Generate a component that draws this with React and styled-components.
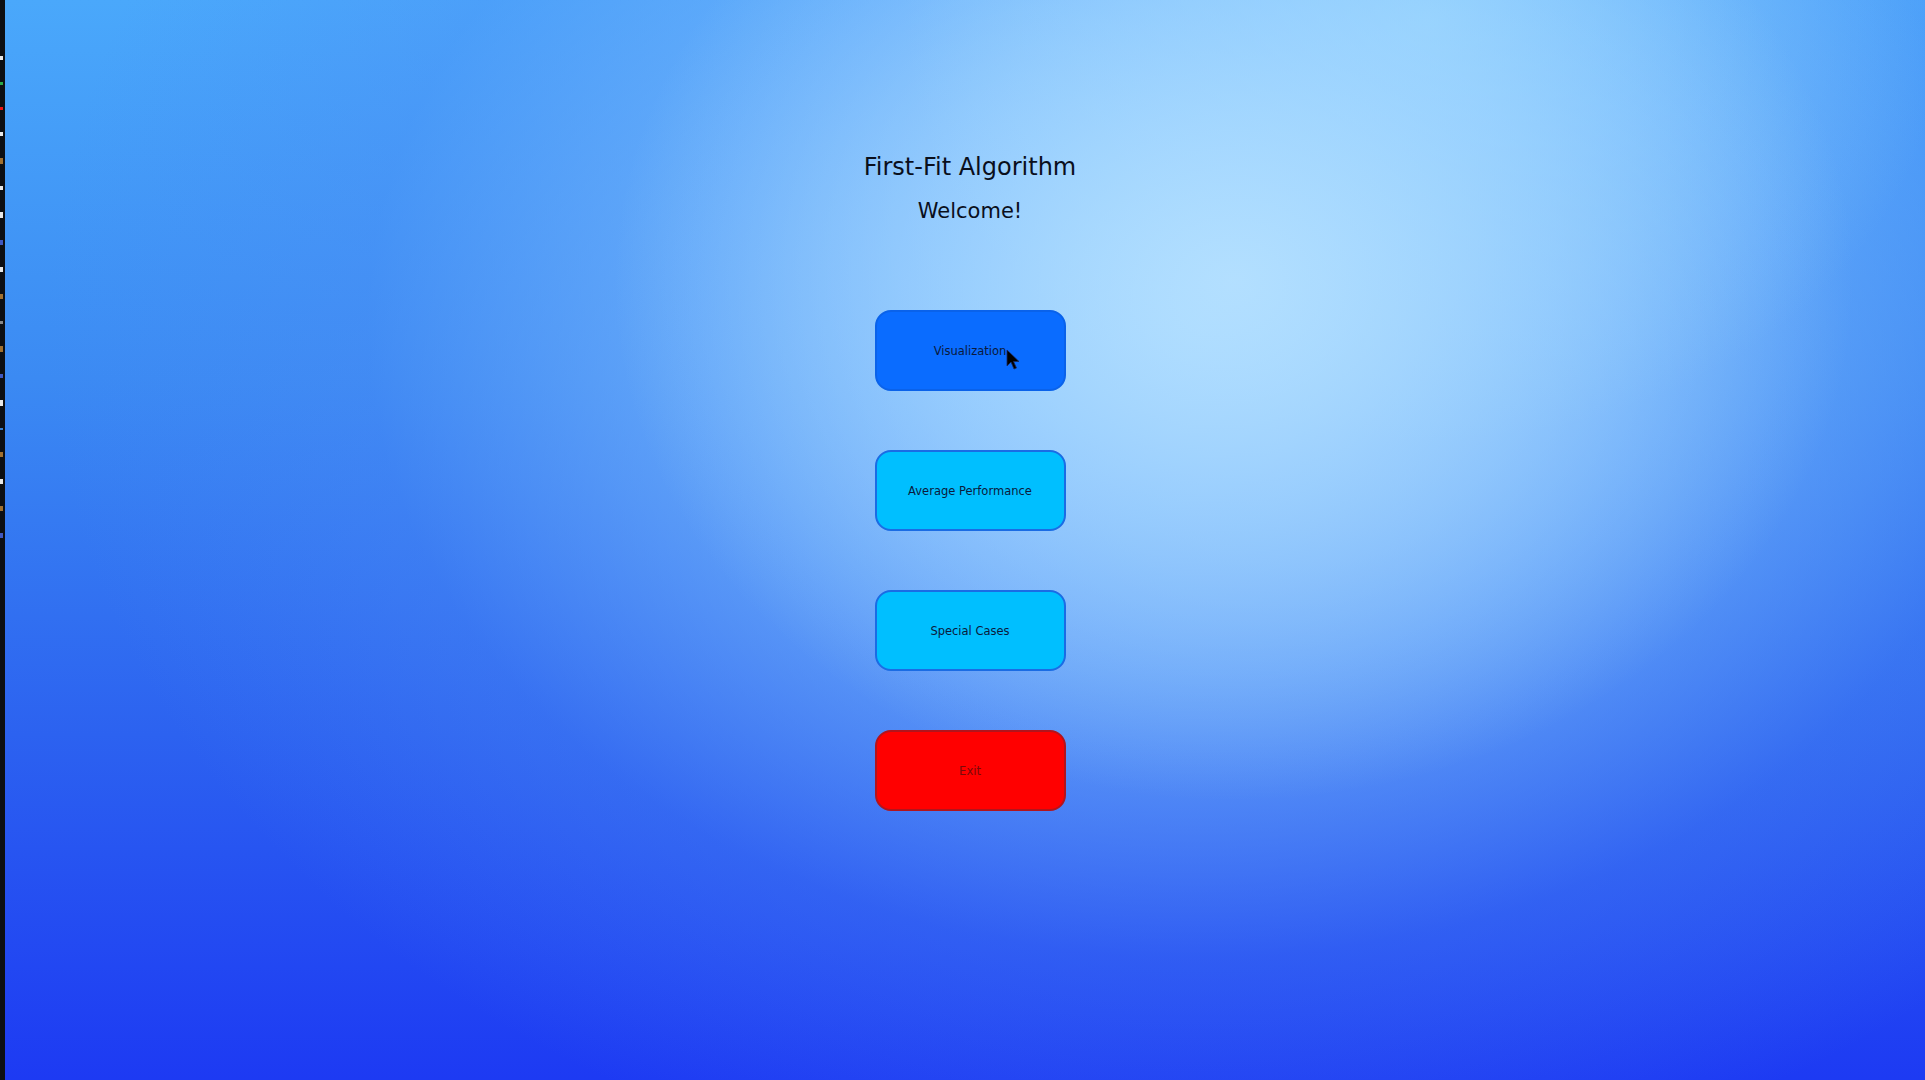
import React from "react";
import styled, { createGlobalStyle } from "styled-components";

const GlobalStyle = createGlobalStyle`
  html, body {
    margin: 0;
    padding: 0;
    height: 100%;
    overflow: hidden;
  }
  body {
    font-family: "Liberation Sans", Arial, sans-serif;
  }
`;

const Screen = styled.div`
  display: flex;
  width: 100vw;
  height: 100vh;
`;

const EdgeStrip = styled.div`
  width: 5px;
  background: #0d0f13;
  display: flex;
  flex-direction: column;
  align-items: flex-start;
  gap: 22px;
  padding-top: 56px;
`;

const Tick = styled.div`
  width: 3px;
  height: ${(p) => p.h || 4}px;
  background: ${(p) => p.c || "#e8e8e8"};
`;

const Stage = styled.main`
  flex: 1;
  position: relative;
  display: flex;
  flex-direction: column;
  align-items: center;
  padding-top: 152px;
  padding-left: 10px;
  background:
    radial-gradient(
      ellipse 620px 520px at 64% 26%,
      rgba(182, 225, 255, 0.9) 0%,
      rgba(170, 218, 255, 0.6) 45%,
      rgba(160, 210, 255, 0) 100%
    ),
    radial-gradient(
      ellipse 520px 420px at 74% 2%,
      rgba(150, 215, 255, 0.75) 0%,
      rgba(140, 205, 255, 0) 100%
    ),
    radial-gradient(
      ellipse 1150px 880px at 62% 30%,
      rgba(160, 212, 255, 0.95) 0%,
      rgba(120, 182, 252, 0.7) 40%,
      rgba(80, 140, 245, 0.3) 72%,
      rgba(60, 120, 240, 0) 100%
    ),
    linear-gradient(180deg, #4aa8fb 0%, #3b8af3 35%, #2c62f0 68%, #1d3af3 100%);
`;

const Title = styled.h1`
  margin: 0;
  font-family: "DejaVu Sans", Tahoma, sans-serif;
  font-weight: normal;
  font-size: 24px;
  color: #0a0f1c;
  line-height: 30px;
`;

const Subtitle = styled.h2`
  margin: 16px 0 0;
  font-family: "DejaVu Sans", Tahoma, sans-serif;
  font-weight: normal;
  font-size: 21px;
  color: #0a0f1c;
  line-height: 26px;
`;

const Menu = styled.nav`
  display: flex;
  flex-direction: column;
  gap: 59px;
  margin-top: 86px;
`;

const palette = {
  active: { bg: "#0a6cff", border: "#0a62ea", text: "#0b1a3c" },
  normal: { bg: "#00bfff", border: "#1a6ce4", text: "#0b1a3c" },
  danger: { bg: "#ff0000", border: "#b3141c", text: "#7a0a0a" },
};

const MenuButton = styled.button`
  width: 191px;
  height: 81px;
  border-radius: 16px;
  border: 2px solid ${(p) => palette[p.variant].border};
  background: ${(p) => palette[p.variant].bg};
  color: ${(p) => palette[p.variant].text};
  font-family: "DejaVu Sans", Tahoma, sans-serif;
  font-size: 11.5px;
  cursor: pointer;
  padding: 0;
`;

const Pointer = styled.svg`
  position: absolute;
  left: 1001px;
  top: 349px;
  width: 14px;
  height: 22px;
`;

export default function App() {
  return (
    <>
      <GlobalStyle />
      <Screen>
        <EdgeStrip>
          <Tick />
          <Tick c="#2aa84a" h={3} />
          <Tick c="#e11" h={3} />
          <Tick />
          <Tick c="#a07030" h={6} />
          <Tick />
          <Tick h={6} />
          <Tick c="#4058c0" h={5} />
          <Tick h={5} />
          <Tick c="#a07030" h={5} />
          <Tick c="#888" h={3} />
          <Tick c="#a07030" h={6} />
          <Tick c="#4058c0" h={4} />
          <Tick h={6} />
          <Tick c="#3a80d0" h={2} />
          <Tick c="#a07030" h={5} />
          <Tick h={5} />
          <Tick c="#a07030" h={5} />
          <Tick c="#4058c0" h={5} />
        </EdgeStrip>
        <Stage>
          <Title>First-Fit Algorithm</Title>
          <Subtitle>Welcome!</Subtitle>
          <Menu>
            <MenuButton variant="active">Visualization</MenuButton>
            <MenuButton variant="normal">Average Performance</MenuButton>
            <MenuButton variant="normal">Special Cases</MenuButton>
            <MenuButton variant="danger">Exit</MenuButton>
          </Menu>
          <Pointer viewBox="0 0 14 22">
            <path
              d="M1 1 L1 17 L5 13 L8 20 L10.5 19 L7.5 12.5 L13 12.5 Z"
              fill="#000"
              stroke="#1a2a60"
              strokeWidth="0.8"
            />
          </Pointer>
        </Stage>
      </Screen>
    </>
  );
}
